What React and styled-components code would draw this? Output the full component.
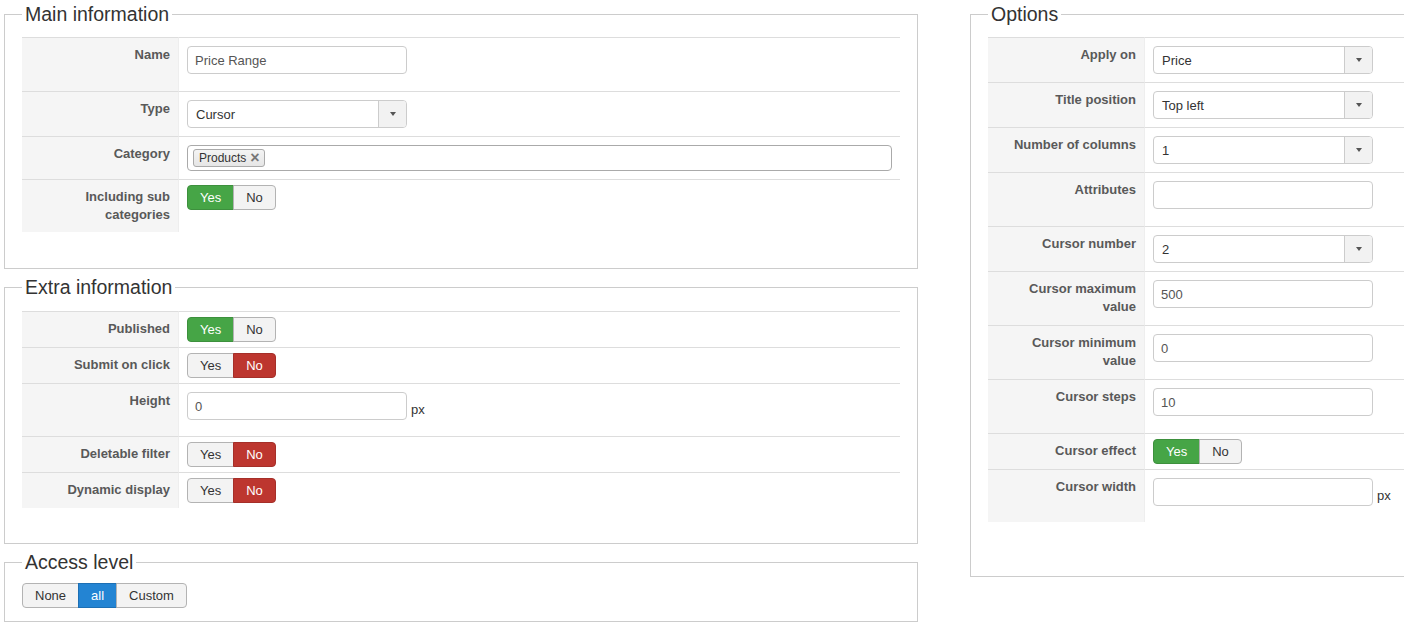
import styled, { createGlobalStyle } from "styled-components";

const GlobalStyle = createGlobalStyle`
  body {
    margin: 0;
    background: #fff;
    font-family: "Liberation Sans", Arial, sans-serif;
    font-size: 13px;
    color: #333;
    overflow: hidden;
  }
  * { box-sizing: border-box; }
`;

const Page = styled.div`
  display: flex;
  align-items: flex-start;
  gap: 52px;
  width: 1900px;
  padding: 2px 0 0 4px;
`;

const Column = styled.div`
  flex: 0 0 914px;
  display: flex;
  flex-direction: column;
  gap: 6px;
`;

const Fieldset = styled.fieldset`
  margin: 0;
  min-width: 0;
  border: 1px solid #ccc;
  padding: ${props => props.$pad || "11px 17px 36px"};
`;

const Legend = styled.legend`
  padding: 0 3px;
  font-size: 19.5px;
  line-height: 24px;
  color: #333;
`;

const FormTable = styled.table`
  width: 100%;
  border-collapse: separate;
  border-spacing: 0;
`;

const Label = styled.th`
  width: 157px;
  padding: 8px;
  border-top: 1px solid #ddd;
  border-right: 1px solid #eee;
  background: #f5f5f5;
  text-align: right;
  vertical-align: top;
  font-size: 13px;
  font-weight: bold;
  line-height: 18px;
  color: #595959;
`;

const Value = styled.td`
  padding: ${props => (props.$tight ? "5px 8px" : "8px")};
  border-top: 1px solid #ddd;
  vertical-align: top;
`;

const Field = styled.div`
  display: flex;
  align-items: flex-start;
`;

const TextInput = styled.div`
  width: 220px;
  height: 28px;
  margin-bottom: ${props => props.$mb}px;
  padding: 1px 7px 0;
  border: 1px solid #ccc;
  border-radius: 4px;
  font-size: 13px;
  line-height: 26px;
  color: #555;
`;

const Suffix = styled.span`
  margin: 9px 0 0 4px;
  font-size: 13px;
  line-height: 18px;
  color: #333;
`;

const Select = styled.div`
  display: flex;
  width: 220px;
  height: 28px;
  border: 1px solid #ccc;
  border-radius: 4px;
  overflow: hidden;
`;

const SelectText = styled.span`
  flex: 1;
  padding: 1px 0 0 8px;
  font-size: 13px;
  line-height: 26px;
  color: #333;
`;

const SelectArrow = styled.span`
  flex: 0 0 28px;
  display: flex;
  align-items: center;
  justify-content: center;
  border-left: 1px solid #ccc;
  background: #f2f2f2;

  &::after {
    content: "";
    border-top: 4px solid #555;
    border-left: 3.5px solid transparent;
    border-right: 3.5px solid transparent;
  }
`;

const TagBox = styled.div`
  display: flex;
  align-items: center;
  width: 100%;
  height: 26px;
  padding: 0 5px;
  border: 1px solid #aaa;
  border-radius: 4px;
`;

const Tag = styled.span`
  display: inline-flex;
  align-items: center;
  gap: 4px;
  height: 18px;
  padding: 0 4px 0 5px;
  border: 1px solid #aaa;
  border-radius: 3px;
  background: linear-gradient(#f4f4f4, #e6e6e6);
  font-size: 12px;
  color: #333;
`;

const TagClose = styled.span`
  font-size: 16px;
  font-weight: bold;
  line-height: 14px;
  color: #777;
`;

const BtnGroup = styled.div`
  display: inline-flex;
`;

const btnColors = {
  yes: ["#46a546", "#3d903d", "#fff"],
  no: ["#bd362f", "#a52f29", "#fff"],
  on: ["#2384d3", "#1c6fb4", "#fff"],
  off: ["#f3f3f3", "#b3b3b3", "#333"],
};

const Btn = styled.span`
  height: 25px;
  padding: 0 12px;
  border: 1px solid ${props => btnColors[props.$tone][1]};
  background: ${props => btnColors[props.$tone][0]};
  color: ${props => btnColors[props.$tone][2]};
  font-size: 13px;
  line-height: 23px;

  &:first-child { border-radius: 4px 0 0 4px; }
  &:last-child { border-radius: 0 4px 4px 0; }
  & + & { margin-left: -1px; }
`;

const Toggle = ({ value }) => (
  <BtnGroup>
    <Btn $tone={value ? "yes" : "off"}>Yes</Btn>
    <Btn $tone={value ? "off" : "no"}>No</Btn>
  </BtnGroup>
);

const FieldValue = ({ row }) => {
  switch (row.kind) {
    case "select":
      return (
        <Select>
          <SelectText>{row.value}</SelectText>
          <SelectArrow />
        </Select>
      );
    case "tags":
      return (
        <TagBox>
          <Tag>{row.value}<TagClose>×</TagClose></Tag>
        </TagBox>
      );
    case "toggle":
      return <Toggle value={row.value} />;
    default:
      return (
        <Field>
          <TextInput $mb={row.suffix ? 8 : 9}>{row.value}</TextInput>
          {row.suffix && <Suffix>{row.suffix}</Suffix>}
        </Field>
      );
  }
};

const mainRows = [
  { label: "Name", kind: "text", value: "Price Range" },
  { label: "Type", kind: "select", value: "Cursor" },
  { label: "Category", kind: "tags", value: "Products" },
  { label: <>Including sub<br />categories</>, kind: "toggle", value: true },
];

const extraRows = [
  { label: "Published", kind: "toggle", value: true },
  { label: "Submit on click", kind: "toggle", value: false },
  { label: "Height", kind: "text", value: "0", suffix: "px" },
  { label: "Deletable filter", kind: "toggle", value: false },
  { label: "Dynamic display", kind: "toggle", value: false },
];

const optionRows = [
  { label: "Apply on", kind: "select", value: "Price" },
  { label: "Title position", kind: "select", value: "Top left" },
  { label: "Number of columns", kind: "select", value: "1" },
  { label: "Attributes", kind: "text", value: "" },
  { label: "Cursor number", kind: "select", value: "2" },
  { label: <>Cursor maximum<br />value</>, kind: "text", value: "500" },
  { label: <>Cursor minimum<br />value</>, kind: "text", value: "0" },
  { label: "Cursor steps", kind: "text", value: "10" },
  { label: "Cursor effect", kind: "toggle", value: true },
  { label: "Cursor width", kind: "text", value: "", suffix: "px" },
];

const FormRows = ({ rows }) => (
  <FormTable>
    <tbody>
      {rows.map((row, i) => (
        <tr key={i}>
          <Label>{row.label}</Label>
          <Value $tight={row.kind === "toggle"}>
            <FieldValue row={row} />
          </Value>
        </tr>
      ))}
    </tbody>
  </FormTable>
);

const App = () => (
  <>
    <GlobalStyle />
    <Page>
      <Column>
        <Fieldset>
          <Legend>Main information</Legend>
          <FormRows rows={mainRows} />
        </Fieldset>
        <Fieldset $pad="12px 17px 35px">
          <Legend>Extra information</Legend>
          <FormRows rows={extraRows} />
        </Fieldset>
        <Fieldset $pad="9px 17px 13px">
          <Legend>Access level</Legend>
          <BtnGroup>
            <Btn $tone="off">None</Btn>
            <Btn $tone="on">all</Btn>
            <Btn $tone="off">Custom</Btn>
          </BtnGroup>
        </Fieldset>
      </Column>
      <Column>
        <Fieldset $pad="11px 17px 54px">
          <Legend>Options</Legend>
          <FormRows rows={optionRows} />
        </Fieldset>
      </Column>
    </Page>
  </>
);

export default App;
